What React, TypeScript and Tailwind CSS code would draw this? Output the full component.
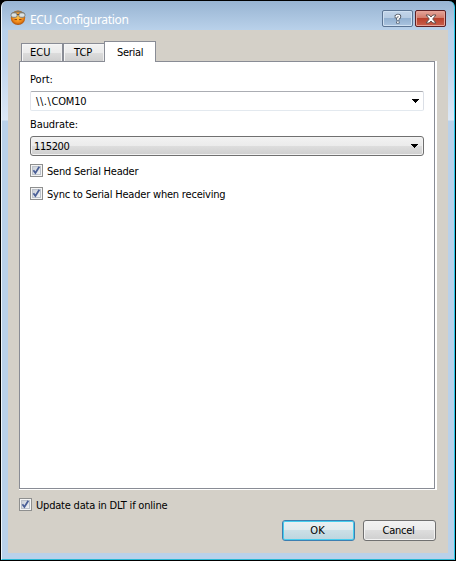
import type { ReactNode } from 'react';

function Check({ label, spacing }: { label: string; spacing: string }) {
  return (
    <label className="flex h-[13px] items-center">
      <svg width="13" height="13" viewBox="0 0 13 13" className="shrink-0">
        <defs>
          <linearGradient id="box" x1="0" y1="0" x2="1" y2="1">
            <stop offset="0" stopColor="#c9ced6" />
            <stop offset="1" stopColor="#f5f6f7" />
          </linearGradient>
        </defs>
        <rect x=".5" y=".5" width="12" height="12" fill="#f4f4f4" stroke="#8e8f8f" />
        <rect x="2.5" y="2.5" width="8" height="8" fill="url(#box)" stroke="#bcc2cb" />
        <path d="M3.4 6.2 L5.4 9 L9.3 2.8" fill="none" stroke="#4a5f97" strokeWidth="1.8" />
      </svg>
      <span className={`ml-1 pt-[2px] leading-[13px] ${spacing}`}>{label}</span>
    </label>
  );
}

function Arrow() {
  return (
    <svg width="7" height="4" viewBox="0 0 7 4" shapeRendering="crispEdges">
      <path d="M0 0H7V1H6V2H5V3H4V4H3V3H2V2H1V1H0Z" fill="#000" />
    </svg>
  );
}

function Tab({ children }: { children: ReactNode }) {
  return (
    <div className="flex h-[18px] items-center border border-b-0 border-[#898c95] bg-[linear-gradient(to_bottom,#f2f2f2,#ebebeb_50%,#dddddd_50%,#cfcfcf)] pt-[2px] shadow-[inset_1px_1px_0_#f6f6f6,inset_-1px_0_0_#f0f0f0]">
      {children}
    </div>
  );
}

export default function App() {
  return (
    <div className="h-[561px] w-[456px] overflow-hidden bg-black p-px font-['DejaVu_Sans_Condensed','DejaVu_Sans',sans-serif] text-[11px] text-black [font-stretch:condensed]">
      <div className="flex h-[559px] w-[454px] flex-col rounded-t-[6px] border-r border-b border-l border-r-[#28c8e8] border-b-[#28b8d4] border-l-[#eef6fc] bg-[linear-gradient(to_bottom,#98b4d2_0px,#b9d1ea_29px,#bfd4ec_60px,#dce8f6_119px,#b9d1ea_120px)] px-[6px] pb-[6px]">
        <header className="flex h-[29px] shrink-0 items-start">
          <svg width="16" height="16" viewBox="0 0 16 16" className="mt-[9px] ml-[2px]">
            <defs>
              <radialGradient id="face" cx=".5" cy=".45" r=".6">
                <stop offset="0" stopColor="#ffc445" />
                <stop offset=".6" stopColor="#f28a1a" />
                <stop offset="1" stopColor="#994006" />
              </radialGradient>
            </defs>
            <ellipse cx="8" cy="7.8" rx="7.2" ry="7.2" fill="url(#face)" />
            <path d="M1.5 4Q8 -1 14.5 4" fill="none" stroke="#85785e" strokeWidth="1.6" />
            <rect x="1" y="2.9" width="6.2" height="4.4" rx="2" fill="#dce2e2" stroke="#777b79" strokeWidth=".9" />
            <rect x="8.8" y="2.9" width="6.2" height="4.4" rx="2" fill="#dce2e2" stroke="#777b79" strokeWidth=".9" />
            <path d="M6.8 4.5H9.2" stroke="#5e5144" />
            <path d="M4.5 9.6H7M9 9.6H11.5" stroke="#8c3d0c" />
          </svg>
          <h1 className="mt-[10px] ml-1 font-['Noto_Sans',sans-serif] text-[12px] leading-[17px] font-normal tracking-[-0.32px] whitespace-nowrap text-white [font-stretch:normal]">
            ECU Configuration
          </h1>
          <div className="mt-[9px] mr-[2px] ml-auto flex gap-[2px]">
            <button className="flex h-[17px] w-[31px] items-center justify-center rounded-[2px] border border-[#5b7493] bg-[linear-gradient(to_bottom,#c3d5e9,#b4cae1_50%,#93b1d1_50%,#abc5e0)] shadow-[inset_0_0_0_1px_#cfe0f1]">
              <svg width="10" height="12" viewBox="0 0 10 12" fill="none">
                <path d="M1.7 3.6H3.5Q3.5 2.4 5 2.4T6.6 3.7Q6.6 4.6 4.9 5.5V7.5M4.9 8.5V10.4" stroke="#4c5460" strokeWidth="3.3" />
                <path d="M2.4 3.6H3.5Q3.5 2.4 5 2.4T6.6 3.7Q6.6 4.6 4.9 5.5V7.1M4.9 8.5V10" stroke="#fff" strokeWidth="1.6" />
              </svg>
            </button>
            <button className="flex h-[17px] w-[31px] items-center justify-center rounded-[2px] border border-[#5c2024] bg-[linear-gradient(to_bottom,#e5a69b,#d27c6c_45%,#b83d28_45%,#c95f4c)] shadow-[inset_0_0_0_1px_#e7a397]">
              <svg width="12" height="10" viewBox="0 0 12 10">
                <path d="M1 1H4.2L6 3L7.8 1H11L7.7 5L11 9H7.8L6 7L4.2 9H1L4.3 5Z" fill="#fff" stroke="#62514f" />
              </svg>
            </button>
          </div>
        </header>
        <main className="flex grow flex-col bg-[#d4d0c8] px-[11px] pt-[11px]">
          <div className="flex h-5 items-end pl-[2px]">
            <div className="w-[42px]"><Tab><span className="pl-[8px]">ECU</span></Tab></div>
            <div className="w-[42px]"><Tab><span className="pl-[10px]">TCP</span></Tab></div>
            <div className="relative -mb-px -ml-px h-[21px] w-[52px] border border-b-0 border-[#898c95] bg-white pt-[4px] pl-[12px] leading-[14px] tracking-[-0.3px]">Serial</div>
          </div>
          <section className="h-[429px] w-[418px] shrink-0 bg-white pr-[2px] pb-px">
            <div className="flex h-full flex-col border border-[#898c95] pt-[11px] pl-[10px]">
              <div className="h-[14px] leading-[14px]">Port:</div>
              <div className="mt-[4px] flex h-5 w-[394px] items-center justify-between rounded-[2px] border border-t-[#abadb3] border-r-[#dbdfe6] border-b-[#e3e9ef] border-l-[#e2e3ea] pr-1 pl-[5px]">
                <span className="pt-[3px]"><span className="tracking-[0.6px]">{'\\\\.\\'}</span><span className="tracking-[-0.2px]">COM10</span></span>
                <Arrow />
              </div>
              <div className="mt-[7px] h-[14px] leading-[14px] tracking-[-0.1px]">Baudrate:</div>
              <div className="mt-[4px] flex h-5 w-[394px] items-center justify-between rounded-[3px] border border-[#707070] bg-[linear-gradient(to_bottom,#f2f2f2,#ebebeb_50%,#dddddd_50%,#cfcfcf)] pr-[5px] pl-[3px] shadow-[inset_0_0_0_1px_#f3f3f3]">
                <span className="pt-[2px] tracking-[-0.4px]">115200</span>
                <Arrow />
              </div>
              <div className="mt-2"><Check label="Send Serial Header" spacing="tracking-[-0.22px]" /></div>
              <div className="mt-[10px]"><Check label="Sync to Serial Header when receiving" spacing="tracking-[-0.2px]" /></div>
            </div>
          </section>
          <div className="mt-2"><Check label="Update data in DLT if online" spacing="tracking-[-0.2px]" /></div>
          <footer className="mt-[9px] flex justify-end gap-2 pr-px">
            <button className="h-[21px] w-[73px] rounded-[3px] border border-[#3c7fb1] bg-[linear-gradient(to_bottom,#eaf0f2,#dfeaee_50%,#cbdfe6_50%,#bcd5df)] pt-[2px] pr-[2px] shadow-[inset_0_0_0_1px_#46cdee]">OK</button>
            <button className="h-[21px] w-[73px] rounded-[3px] border border-[#707070] bg-[linear-gradient(to_bottom,#f2f2f2,#ebebeb_50%,#dddddd_50%,#cfcfcf)] pt-[2px] pr-[2px] tracking-[-0.25px] shadow-[inset_0_0_0_1px_#f3f3f3]">Cancel</button>
          </footer>
        </main>
      </div>
    </div>
  );
}
